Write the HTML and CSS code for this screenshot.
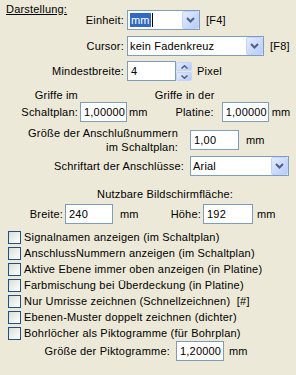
FILE: index.html
```html
<!DOCTYPE html>
<html lang="de">
<head>
  <meta charset="UTF-8" />
  <title>Darstellung</title>
  <link rel="stylesheet" href="styles.css">
</head>
<body>
  <div class="dlg">
    <div class="row r-unit">
      <span class="lab lab-unit"><u class="heading">Darstellung:</u>Einheit:</span>
      <div class="field combo w-unit">
        <span class="val"><span class="hl">mm</span><i class="caret"></i></span>
        <span class="drop"><svg width="9" height="6" viewBox="0 0 9 6"><polyline points="1,1 4.5,4.5 8,1" fill="none" stroke="#4D6185" stroke-width="2"/></svg></span>
      </div>
      <span class="key">[F4]</span>
    </div>

    <div class="row r-cursor">
      <span class="lab w124">Cursor:</span>
      <div class="field combo w-cursor">
        <span class="val">kein Fadenkreuz</span>
        <span class="drop"><svg width="9" height="6" viewBox="0 0 9 6"><polyline points="1,1 4.5,4.5 8,1" fill="none" stroke="#4D6185" stroke-width="2"/></svg></span>
      </div>
      <span class="key">[F8]</span>
    </div>

    <div class="row r-min">
      <span class="lab w124">Mindestbreite:</span>
      <div class="field w-min">4</div>
      <div class="spin">
        <span class="spin-btn"><svg width="7" height="4" viewBox="0 0 7 4"><polyline points="0.5,3.5 3.5,0.8 6.5,3.5" fill="none" stroke="#4D6185" stroke-width="1.5"/></svg></span>
        <span class="spin-btn"><svg width="7" height="4" viewBox="0 0 7 4"><polyline points="0.5,0.5 3.5,3.2 6.5,0.5" fill="none" stroke="#4D6185" stroke-width="1.5"/></svg></span>
      </div>
      <span class="unit-pixel">Pixel</span>
    </div>

    <div class="grips">
      <div class="grip grip-sch">
        <span class="lab two">Griffe im<br>Schaltplan:</span>
        <div class="field w-grip">1,00000</div>
        <span class="mm-a">mm</span>
      </div>
      <div class="grip grip-pla">
        <span class="lab two">Griffe in der<br>Platine:</span>
        <div class="field w-grip">1,00000</div>
        <span class="mm-b">mm</span>
      </div>
    </div>

    <div class="row r-pin">
      <span class="lab pin-lab">Größe der Anschlußnummern<br>im Schaltplan:</span>
      <div class="field w-pin">1,00</div>
      <span class="mm-pin">mm</span>
    </div>

    <div class="row r-font">
      <span class="lab w184">Schriftart der Anschlüsse:</span>
      <div class="field combo w-font">
        <span class="val">Arial</span>
        <span class="drop"><svg width="9" height="6" viewBox="0 0 9 6"><polyline points="1,1 4.5,4.5 8,1" fill="none" stroke="#4D6185" stroke-width="2"/></svg></span>
      </div>
    </div>

    <div class="screen-title">Nutzbare Bildschirmfläche:</div>

    <div class="row r-screen">
      <span class="lab w63">Breite:</span>
      <div class="field w-br">240</div>
      <span class="mm-br">mm</span>
      <span class="lab w61">Höhe:</span>
      <div class="field w-ho">192</div>
      <span class="mm-ho">mm</span>
    </div>

    <ul class="checks">
      <li><span class="box"></span>Signalnamen anzeigen (im Schaltplan)</li>
      <li><span class="box"></span>AnschlussNummern anzeigen (im Schaltplan)</li>
      <li><span class="box"></span>Aktive Ebene immer oben anzeigen (in Platine)</li>
      <li><span class="box"></span>Farbmischung bei Überdeckung (in Platine)</li>
      <li><span class="box"></span>Nur Umrisse zeichnen (Schnellzeichnen)&nbsp; [#]</li>
      <li><span class="box"></span>Ebenen-Muster doppelt zeichnen (dichter)</li>
      <li><span class="box"></span>Bohrlöcher als Piktogramme (für Bohrplan)</li>
    </ul>

    <div class="row r-pict">
      <span class="lab w170">Größe der Piktogramme:</span>
      <div class="field w-pict">1,20000</div>
      <span class="mm-pict">mm</span>
    </div>
  </div>
</body>
</html>
```

FILE: styles.css
```css
* {
  box-sizing: border-box;
}
body {
  margin: 0;
  width: 296px;
  height: 375px;
  overflow: hidden;
  background: #ECE9D8;
  color: #000;
  font-family: 'Liberation Sans', Arial, sans-serif;
  font-size: 11px;
  letter-spacing: 0.2px;
}
.dlg {
  padding-top: 10px;
}
.row {
  display: flex;
  align-items: center;
  height: 20px;
  white-space: nowrap;
}
.lab {
  flex-shrink: 0;
  text-align: right;
}
.w124 { width: 124px; margin-right: 3px; }
.w184 { width: 184px; margin-right: 6px; }
.w63 { width: 63px; margin-right: 2px; }
.w61 { width: 61px; margin-right: 2px; }
.w170 { width: 170px; margin-right: 6px; }

.lab-unit {
  width: 124px;
  margin-right: 3px;
  display: flex;
  justify-content: space-between;
  align-items: center;
}
.heading {
  margin-left: 6px;
  margin-bottom: 22px;
}

.field {
  height: 20px;
  border: 1px solid #7F9DB9;
  background: #fff;
  padding: 0 3px;
  display: flex;
  align-items: center;
  flex-shrink: 0;
}
.combo {
  padding: 0 0 0 2px;
}
.combo .val {
  flex: 1;
  display: flex;
  align-items: center;
}
.hl {
  background: #316AC5;
  color: #fff;
  padding: 1px 1px;
}
.caret {
  width: 1px;
  height: 14px;
  background: #000;
  margin-left: 1px;
}
.drop {
  width: 17px;
  height: 18px;
  display: flex;
  align-items: center;
  justify-content: center;
  background: linear-gradient(135deg, #E3ECFE, #B8CBF8);
  border: 1px solid #C3D3FD;
  border-radius: 2px;
}
.key {
  margin-left: 6px;
}
.w-unit { width: 73px; }
.w-cursor { width: 137px; }

.r-cursor { margin-top: 6px; }
.r-min { margin-top: 5px; }
.w-min { width: 49px; }
.spin {
  width: 16px;
  height: 20px;
  display: flex;
  flex-direction: column;
  gap: 1px;
  padding-top: 1px;
}
.spin-btn {
  flex: 1;
  display: flex;
  align-items: center;
  justify-content: center;
  background: linear-gradient(135deg, #E3ECFE, #B8CBF8);
  border: 1px solid #C3D3FD;
  border-radius: 2px;
}
.unit-pixel { margin-left: 5px; }

.grips {
  display: flex;
  margin-top: 6px;
  height: 35px;
}
.grip {
  display: flex;
  align-items: flex-end;
  white-space: nowrap;
}
.two {
  line-height: 17px;
  margin-bottom: 1px;
}
.grip-sch .lab { width: 78px; margin-right: 2px; }
.grip-pla .lab { width: 59px; margin-right: 8px; }
.grip-pla { margin-left: 7px; }
.w-grip { width: 47px; }
.grip span.mm-a, .grip span.mm-b {
  height: 20px;
  line-height: 20px;
}
.mm-a { margin-left: 2px; }
.mm-b { margin-left: 3px; }

.r-pin {
  height: 28px;
  margin-top: 4px;
}
.pin-lab {
  width: 178px;
  margin-right: 12px;
  line-height: 14px;
}
.w-pin { width: 49px; }
.mm-pin { margin-left: 7px; }

.r-font { margin-top: 2px; }
.w-font { width: 99px; }

.screen-title {
  margin-top: 11px;
  padding-left: 97px;
  line-height: 14px;
}
.r-screen { margin-top: 3px; }
.w-br { width: 48px; }
.mm-br { margin-left: 7px; width: 20px; }
.w-ho { width: 50px; }
.mm-ho { margin-left: 4px; }

.checks {
  list-style: none;
  margin: 5px 0 0;
  padding: 0 0 0 8px;
}
.checks li {
  height: 16px;
  display: flex;
  align-items: center;
  white-space: nowrap;
}
.box {
  width: 13px;
  height: 13px;
  border: 1px solid #1C5180;
  background: linear-gradient(135deg, #DCDCD7, #FFFFFF);
  margin-right: 3px;
  flex-shrink: 0;
}

.w-pict { width: 48px; }
.mm-pict { margin-left: 5px; }
```
